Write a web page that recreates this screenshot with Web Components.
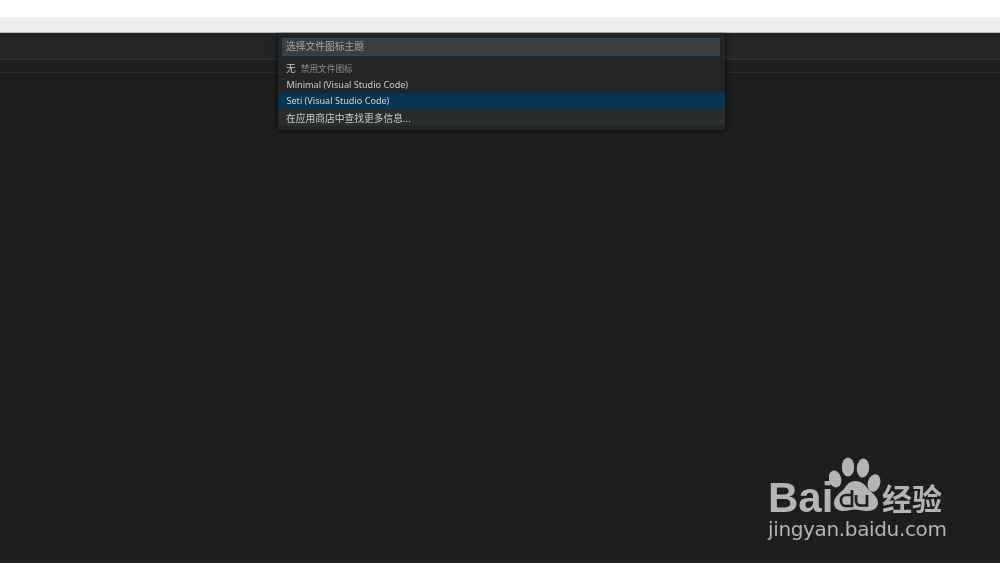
<!DOCTYPE html>
<html lang="zh">
<head>
<meta charset="utf-8">
<title>选择文件图标主题</title>
<style>
  html, body { margin: 0; height: 100%; background: #1e1e1e; }
  body { overflow: hidden; font-family: "Noto Sans", "Noto Sans CJK SC", sans-serif; }
</style>
</head>
<body>
<page-shell>
  <editor-window>
    <quick-pick placeholder="选择文件图标主题" slot="overlay">
      <pick-item>无<span slot="note">禁用文件图标</span></pick-item>
      <pick-item latin>Minimal (Visual Studio Code)</pick-item>
      <pick-item latin state="active">Seti (Visual Studio Code)</pick-item>
      <pick-item state="more">在应用商店中查找更多信息...</pick-item>
    </quick-pick>
    <baidu-mark slot="mark"></baidu-mark>
  </editor-window>
</page-shell>

<script>
  // Browser chrome strips above the dark editor
  class PageShell extends HTMLElement {
    constructor() {
      super();
      const shadow = this.attachShadow({ mode: "open" });
      shadow.innerHTML = `
        <style>
          :host { display: flex; flex-direction: column; width: 1000px; height: 563px; }
          .white { height: 17px; background: #fff; }
          .grey { height: 14.5px; background: #eeeeee; border-bottom: 0.5px solid #bbb; }
          .body { flex: 1; display: flex; min-height: 0; }
          ::slotted(*) { flex: 1; }
        </style>
        <div class="white"></div>
        <div class="grey"></div>
        <div class="body"><slot></slot></div>`;
    }
  }

  // Tab bar, breadcrumb strip, empty editor. Overlay and watermark sit on top.
  class EditorWindow extends HTMLElement {
    constructor() {
      super();
      const shadow = this.attachShadow({ mode: "open" });
      shadow.innerHTML = `
        <style>
          :host { display: flex; flex-direction: column; position: relative; background: #1e1e1e; }
          .tabs { height: 25px; background: #252526; border-bottom: 2px solid #2d2d2d; }
          .crumbs { height: 12px; background: #1f1f1f; border-bottom: 1px solid #2a2a2a; }
          .editor { flex: 1; }
          .overlay { position: absolute; left: 278px; top: 0; }
          .mark { position: absolute; left: 768px; top: 423px; }
        </style>
        <div class="tabs"></div>
        <div class="crumbs"></div>
        <div class="editor"></div>
        <div class="overlay"><slot name="overlay"></slot></div>
        <div class="mark"><slot name="mark"></slot></div>`;
    }
  }

  class QuickPick extends HTMLElement {
    constructor() {
      super();
      const shadow = this.attachShadow({ mode: "open" });
      shadow.innerHTML = `
        <style>
          :host {
            display: block;
            width: 447px;
            height: 97px;
            box-sizing: border-box;
            background: #252526;
            box-shadow: 0 0 6px rgba(0, 0, 0, 0.8);
            clip-path: inset(0 -10px -10px -10px);
            padding-top: 5px;
            color: #ccc;
          }
          .field {
            height: 18px;
            margin: 0 5px 0 4px;
            box-sizing: border-box;
            padding-left: 3px;
            background: #3c3c3c;
            border: 1px solid #1c4a6e;
            color: #a6a6a6;
            font-size: 9.75px;
            line-height: 16px;
          }
          .field span { filter: blur(0.3px); display: block; }
          .list { display: flex; flex-direction: column; margin-top: 5px; }
        </style>
        <div class="field"><span id="field"></span></div>
        <div class="list"><slot></slot></div>`;
      shadow.getElementById("field").textContent = this.getAttribute("placeholder");
    }
  }

  class PickItem extends HTMLElement {
    constructor() {
      super();
      const shadow = this.attachShadow({ mode: "open" });
      shadow.innerHTML = `
        <style>
          :host {
            display: block;
            height: 16.33px;
            padding-left: 8px;
            font-size: 9.75px;
            line-height: 16.33px;
            color: #ccc;
          }
          :host([latin]) { font-size: 9.1px; padding-left: 8.5px; }
          :host([state="active"]) { background: #073655; color: #d0d5d8; }
          :host([state="more"]) { background: #2a2d2e; }
          :host([state="more"]) .text { padding-top: 1.5px; }
          .text { display: flex; gap: 5px; filter: blur(0.3px); }
          .note { font-size: 8.67px; color: #8f8f8f; }
        </style>
        <div class="text"><span><slot></slot></span><span class="note"><slot name="note"></slot></span></div>`;
    }
  }

  class BaiduMark extends HTMLElement {
    constructor() {
      super();
      const shadow = this.attachShadow({ mode: "open" });
      shadow.innerHTML = `
        <style>
          :host { display: block; width: 180px; color: #b4b4b4; }
          .top { display: flex; align-items: flex-end; height: 59px; filter: blur(0.3px); }
          .bai { font: bold 42px/42px "Liberation Sans", sans-serif; margin-bottom: -4px; width: 61px; }
          svg { width: 52px; height: 58px; flex: none; margin-bottom: 1px; }
          .cn { font: bold 30px/32px "Noto Sans CJK SC", sans-serif; margin-left: 1px; margin-bottom: 2px; white-space: nowrap; }
          .url { font: 20px/24px "DejaVu Sans", sans-serif; margin-top: 2px; white-space: nowrap; letter-spacing: -0.35px; filter: blur(0.3px); }
        </style>
        <div class="top">
          <span class="bai">Bai</span>
          <svg viewBox="0 0 52 58" aria-hidden="true">
            <g fill="currentColor">
              <ellipse cx="6" cy="23" rx="6.2" ry="8.5" transform="rotate(-15 6 23)"/>
              <ellipse cx="19" cy="11" rx="6.2" ry="9.5"/>
              <ellipse cx="34" cy="12" rx="6.2" ry="9.5" transform="rotate(5 34 12)"/>
              <ellipse cx="45" cy="27" rx="6.2" ry="9" transform="rotate(15 45 27)"/>
              <path d="M26 25c-6 0-8 4-11 8-4 4-10 8-10 14 0 5 4 8 9 8 5 0 8-1.500 12-1.500s7 1.500 12 1.500c6 0 11-3 11-8 0-6-6-10-10-14-3-4-6-8-13-8z"/>
            </g>
            <g fill="none" stroke="#1e1e1e" stroke-width="2.7">
              <path d="M23 34v16h-6a5 5 0 0 1-5-5v-1a5 5 0 0 1 5-5h6"/>
              <path d="M27 39v6a4.500 4.500 0 0 0 4.500 4.500H38V39"/>
            </g>
          </svg>
          <span class="cn">经验</span>
        </div>
        <div class="url">jingyan.baidu.com</div>`;
    }
  }

  customElements.define("page-shell", PageShell);
  customElements.define("editor-window", EditorWindow);
  customElements.define("quick-pick", QuickPick);
  customElements.define("pick-item", PickItem);
  customElements.define("baidu-mark", BaiduMark);
</script>
</body>
</html>
